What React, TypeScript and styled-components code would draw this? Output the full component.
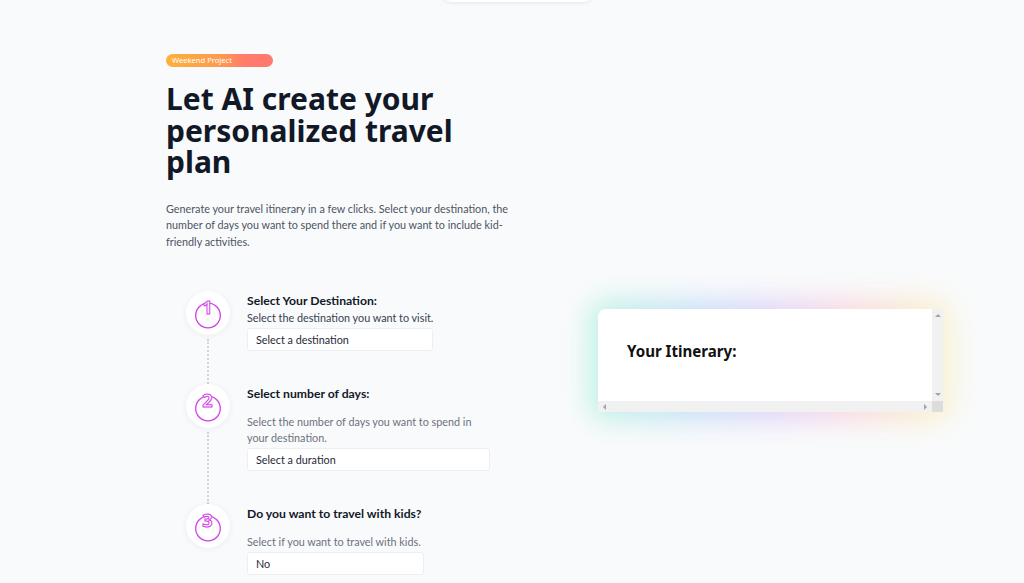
import React from 'react';
import styled, { createGlobalStyle } from 'styled-components';

const GlobalStyle = createGlobalStyle`
  html, body { margin: 0; padding: 0; background: #f9fafb; }
  body { font-family: Lato, "Noto Sans", sans-serif; color: #111827; overflow: hidden; }
  * { box-sizing: border-box; }
`;

const Page = styled.div`
  position: relative;
  width: 1024px;
  height: 583px;
  overflow: hidden;
  padding: 54px 0 0 166px;
`;

const TopNav = styled.div`
  position: absolute;
  top: -40px;
  left: 440px;
  width: 155px;
  height: 42px;
  background: #fff;
  border-radius: 12px;
  box-shadow: 0 1px 4px rgba(0, 0, 0, 0.08);
`;

const Hero = styled.header`
  display: flex;
  flex-direction: column;
  align-items: flex-start;
`;

const Badge = styled.span`
  display: flex;
  align-items: center;
  width: 107px;
  height: 13px;
  padding-left: 6px;
  border-radius: 999px;
  background: linear-gradient(90deg, #fbb13c 0%, #fd9a4e 50%, #ff7b6c 75%, #ff7a6e 100%);
  color: #fff;
  font-family: "Noto Sans", sans-serif;
  font-size: 7.6px;
  line-height: 13px;
`;

const Title = styled.h1`
  margin: 16px 0 0;
  width: 300px;
  font-family: "Noto Sans", sans-serif;
  font-size: 30px;
  line-height: 31.5px;
  font-weight: 700;
  color: #111827;
`;

const Lead = styled.p`
  margin: 23px 0 0;
  width: 352px;
  font-size: 10.8px;
  line-height: 16.5px;
  color: #4b5563;
`;

const Main = styled.main`
  display: flex;
  align-items: flex-start;
  margin-top: 41px;
`;

const Steps = styled.ol`
  list-style: none;
  margin: 0;
  padding: 0 0 0 20px;
  width: 432px;
`;

const Step = styled.li`
  display: flex;
  gap: 17px;
`;

const Rail = styled.div`
  display: flex;
  flex-direction: column;
  align-items: center;
  width: 44px;
  flex: none;
`;

const Bubble = styled.div`
  width: 44px;
  height: 44px;
  border-radius: 50%;
  background: #fff;
  box-shadow: 0 1px 6px rgba(0, 0, 0, 0.06);
  flex: none;
`;

const Line = styled.div<{ $show: boolean }>`
  flex: 1;
  width: 0;
  margin: 4px 0 0;
  border-left: 2px dotted ${(p) => (p.$show ? '#d1d5db' : 'transparent')};
`;

const Content = styled.div`
  display: flex;
  flex-direction: column;
  align-items: flex-start;
  padding-bottom: 33px;
`;

const StepTitle = styled.h3`
  margin: 0;
  font-size: 12.2px;
  line-height: 19px;
  font-weight: 700;
  color: #111827;
`;

const StepDesc = styled.p<{ $gap: number; $dark?: boolean }>`
  margin: ${(p) => p.$gap}px 0 0;
  width: 240px;
  font-size: 10.8px;
  line-height: 16px;
  color: ${(p) => (p.$dark ? '#374151' : '#6b7280')};
`;

const Select = styled.div<{ $w: number }>`
  margin-top: 2px;
  width: ${(p) => p.$w}px;
  height: 23px;
  padding-left: 8px;
  display: flex;
  align-items: center;
  background: #fff;
  border: 1px solid #eceef1;
  border-radius: 3px;
  font-size: 10.8px;
  color: #1f2937;
`;

const CardWrap = styled.div`
  position: relative;
  margin-top: 18px;
  width: 345px;
  height: 103px;

  &::before {
    content: '';
    position: absolute;
    inset: -8px;
    border-radius: 16px;
    background: linear-gradient(90deg, #86efcf 0%, #9cc9f7 30%, #c7b3f7 50%, #f7b5d6 68%, #fbd2a8 85%, #f7f0a8 100%);
    filter: blur(14px);
    opacity: 0.55;
  }
`;

const Card = styled.section`
  position: relative;
  display: grid;
  grid-template-columns: 1fr 11px;
  grid-template-rows: 1fr 11px;
  width: 100%;
  height: 100%;
  background: #fff;
  border-top-left-radius: 8px;
  overflow: hidden;
`;

const CardBody = styled.div`
  padding: 31px 0 0 29px;
`;

const CardTitle = styled.h2`
  margin: 0;
  font-family: "Noto Sans", sans-serif;
  font-size: 15.1px;
  line-height: 22px;
  font-weight: 700;
  color: #111;
`;

const VBar = styled.div`
  background: #f1f1f1;
  display: flex;
  flex-direction: column;
  justify-content: space-between;
  align-items: center;
  padding: 4px 0;
`;

const HBar = styled.div`
  background: #f1f1f1;
  display: flex;
  justify-content: space-between;
  align-items: center;
  padding: 0 4px;
`;

const Corner = styled.div`
  background: #dcdcdc;
`;

const Arrow = ({ dir }: { dir: 'up' | 'down' | 'left' | 'right' }) => {
  const pts = {
    up: '0,4 3,1 6,4',
    down: '0,1 3,4 6,1',
    left: '4,0 1,3 4,6',
    right: '1,0 4,3 1,6',
  }[dir];
  const vertical = dir === 'up' || dir === 'down';
  return (
    <svg width={vertical ? 6 : 5} height={vertical ? 5 : 6} viewBox={vertical ? '0 0 6 5' : '0 0 5 6'}>
      <polygon points={pts} fill="#a3a3a3" />
    </svg>
  );
};

const StepIcon = ({ n }: { n: number }) => (
  <svg width="44" height="44" viewBox="0 0 44 44">
    <circle cx="22" cy="24.5" r="12.3" fill="none" stroke="#d23ee8" strokeWidth="1.3" />
    <text
      x="21.5"
      y="22.5"
      textAnchor="middle"
      fontFamily="'Noto Sans', sans-serif"
      fontWeight="700"
      fontSize="18"
      fill="#fff"
      stroke="#d23ee8"
      strokeWidth="1"
    >
      {n}
    </text>
  </svg>
);

const steps = [
  {
    title: 'Select Your Destination:',
    desc: 'Select the destination you want to visit.',
    gap: 0,
    dark: true,
    value: 'Select a destination',
    w: 186,
  },
  {
    title: 'Select number of days:',
    desc: 'Select the number of days you want to spend in your destination.',
    gap: 11,
    dark: false,
    value: 'Select a duration',
    w: 243,
  },
  {
    title: 'Do you want to travel with kids?',
    desc: 'Select if you want to travel with kids.',
    gap: 11,
    dark: false,
    value: 'No',
    w: 177,
  },
];

export default function App() {
  return (
    <>
      <GlobalStyle />
      <Page>
        <TopNav />
        <Hero>
          <Badge>Weekend Project</Badge>
          <Title>Let AI create your personalized travel plan</Title>
          <Lead>
            Generate your travel itinerary in a few clicks. Select your destination, the number of days you want to
            spend there and if you want to include kid-friendly activities.
          </Lead>
        </Hero>
        <Main>
          <Steps>
            {steps.map((s, i) => (
              <Step key={s.title}>
                <Rail>
                  <Bubble>
                    <StepIcon n={i + 1} />
                  </Bubble>
                  <Line $show={i < steps.length - 1} />
                </Rail>
                <Content>
                  <StepTitle>{s.title}</StepTitle>
                  <StepDesc $gap={s.gap} $dark={s.dark}>
                    {s.desc}
                  </StepDesc>
                  <Select $w={s.w}>{s.value}</Select>
                </Content>
              </Step>
            ))}
          </Steps>
          <CardWrap>
            <Card>
              <CardBody>
                <CardTitle>Your Itinerary:</CardTitle>
              </CardBody>
              <VBar>
                <Arrow dir="up" />
                <Arrow dir="down" />
              </VBar>
              <HBar>
                <Arrow dir="left" />
                <Arrow dir="right" />
              </HBar>
              <Corner />
            </Card>
          </CardWrap>
        </Main>
      </Page>
    </>
  );
}
